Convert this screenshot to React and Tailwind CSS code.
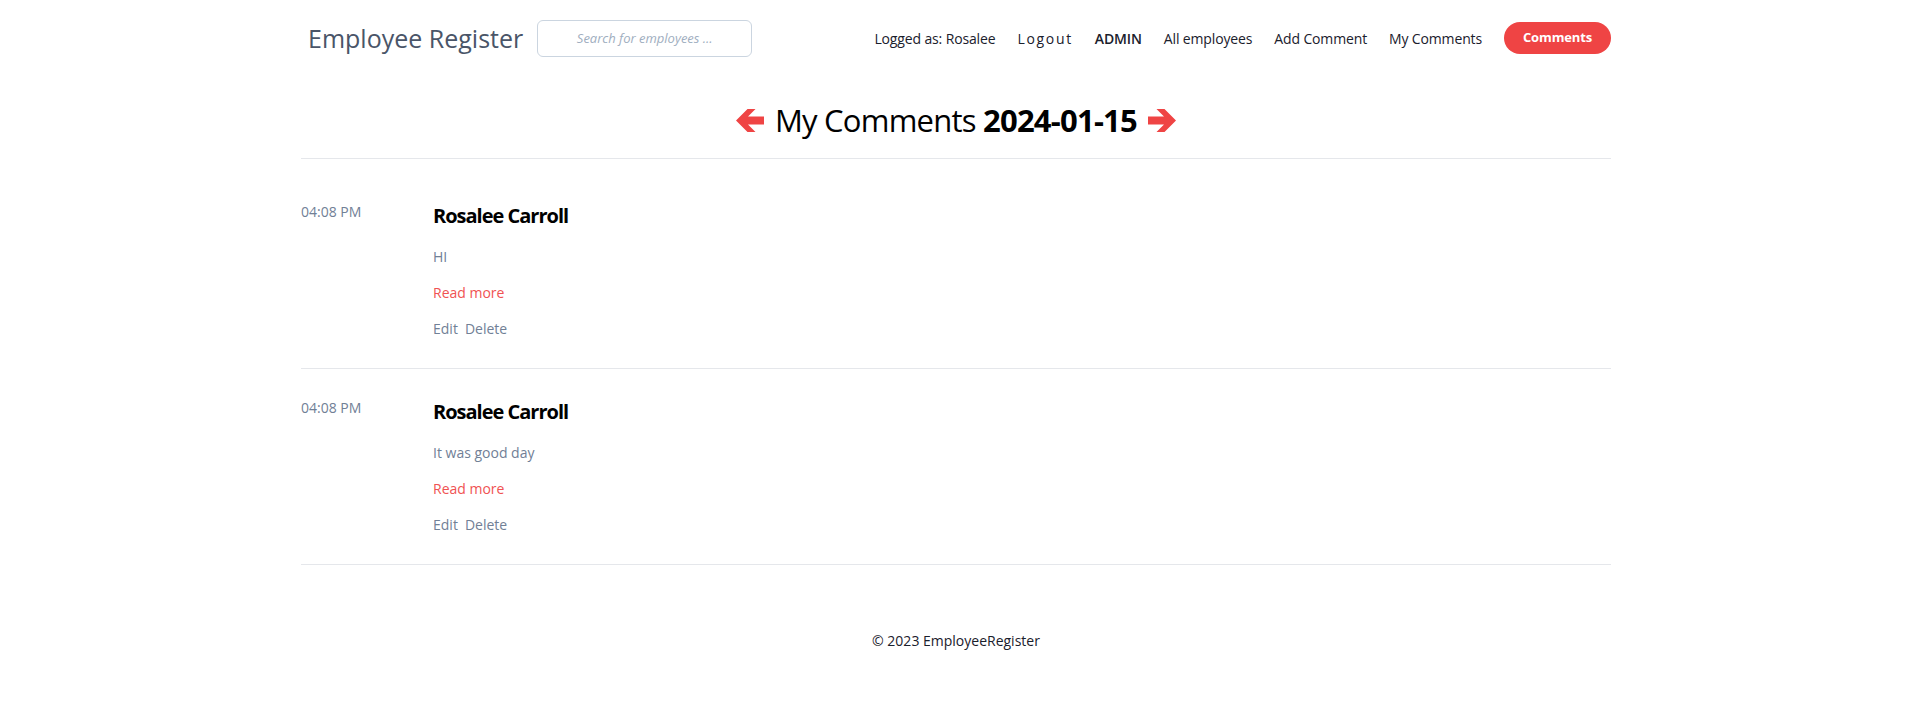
import React from "react";

const comments = [
  { id: 1, time: "04:08 PM", author: "Rosalee Carroll", body: "HI" },
  { id: 2, time: "04:08 PM", author: "Rosalee Carroll", body: "It was good day" },
];

const ArrowLeft = () => (
  <svg width="28" height="25" viewBox="0 0 28 25" className="shrink-0">
    <polygon points="0,12.5 11.5,1 19.5,1 12,8.5 28,8.5 28,16.5 12,16.5 19.5,24 11.5,24" fill="#ef4444" />
  </svg>
);

const ArrowRight = () => (
  <svg width="28" height="25" viewBox="0 0 28 25" className="shrink-0">
    <polygon points="28,12.5 16.5,1 8.5,1 16,8.5 0,8.5 0,16.5 16,16.5 8.5,24 16.5,24" fill="#ef4444" />
  </svg>
);

const Header = () => (
  <header className="flex items-center justify-between h-[76px]">
    <div className="flex items-center">
      <a href="#" className="pl-[7px] text-[25px] leading-8 text-[#4a5568]">
        Employee Register
      </a>
      <input
        type="text"
        placeholder="Search for employees ..."
        className="ml-[14px] w-[215px] h-[37px] border border-[#cbd5e0] rounded-md text-center text-[13px] italic text-[#4a5568] placeholder:text-[#a0aec0] outline-none"
      />
    </div>
    <nav className="flex items-center gap-[22px] text-[14px] tracking-[-0.01em] text-[#1a202c]">
      <span>Logged as: Rosalee</span>
      <a href="#" className="tracking-[0.12em]">Logout</a>
      <a href="#" className="font-semibold">ADMIN</a>
      <a href="#">All employees</a>
      <a href="#">Add Comment</a>
      <a href="#">My Comments</a>
      <a
        href="#"
        className="flex items-center justify-center w-[107px] h-[32px] rounded-full bg-[#ef4444] text-white text-[13px] font-bold"
      >
        Comments
      </a>
    </nav>
  </header>
);

const CommentRow = ({ comment }) => (
  <div className="flex py-[29px] border-b border-[#e5e7eb]">
    <div className="w-[132px] shrink-0 text-[14px] leading-5 text-[#718096]">
      {comment.time}
    </div>
    <div className="flex flex-col">
      <h3 className="text-[20px] leading-7 font-bold tracking-[-0.05em] text-black">
        {comment.author}
      </h3>
      <p className="mt-[17px] text-[14px] leading-5 text-[#718096]">{comment.body}</p>
      <a href="#" className="mt-4 text-[14px] leading-5 text-[#f05252]">
        Read more
      </a>
      <div className="mt-4 flex gap-[7px] text-[14px] leading-5 text-[#718096]">
        <a href="#">Edit</a>
        <a href="#">Delete</a>
      </div>
    </div>
  </div>
);

export default function App() {
  return (
    <div className="min-h-screen bg-white font-['Open_Sans',_'Noto_Sans',_sans-serif]">
      <div className="w-[1310px] mx-auto">
        <Header />

        <div className="pt-[24px] pb-[18px] border-b border-[#e5e7eb] flex items-center justify-center gap-[11px]">
          <ArrowLeft />
          <h1 className="text-[31px] leading-10 tracking-[-0.025em] text-black">
            My Comments <span className="font-bold">2024-01-15</span>
          </h1>
          <ArrowRight />
        </div>

        <div className="pt-[14px]">
          {comments.map((c) => (
            <CommentRow key={c.id} comment={c} />
          ))}
        </div>

        <footer className="pt-[66px] pb-10 text-center text-[14px] leading-5 text-[#1a202c]">
          © 2023 EmployeeRegister
        </footer>
      </div>
    </div>
  );
}
